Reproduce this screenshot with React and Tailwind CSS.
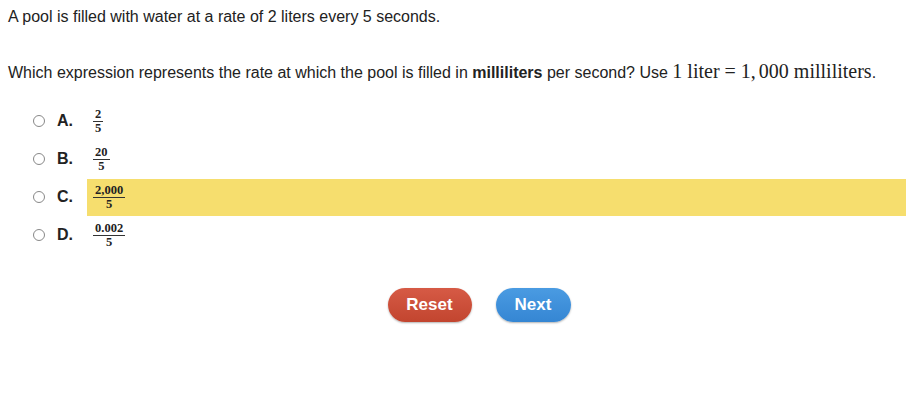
import React from "react";

function Frac({ num, den }) {
  return (
    <span className="inline-flex flex-col items-center text-[12.5px] leading-[13px] font-semibold text-[#222]" style={{ fontFamily: "'Liberation Serif', serif" }}>
      <span className="border-b border-[#333] px-[2px]">{num}</span>
      <span>{den}</span>
    </span>
  );
}

function Option({ letter, num, den, highlight }) {
  return (
    <div className="flex items-center h-[38px]">
      <div className="w-[33px]" />
      <span className="w-[12px] h-[12px] rounded-full border border-[#888] bg-white" />
      <span className="ml-[12px] w-[30px] font-bold text-[16px] text-[#222]">{letter}.</span>
      <div className={`flex-1 h-[37px] flex items-center pl-[6px] ${highlight ? "bg-[#f6de6e]" : ""}`}>
        <Frac num={num} den={den} />
      </div>
    </div>
  );
}

export default function App() {
  return (
    <div className="w-[906px] h-[418px] bg-white text-[#222] text-[16px]" style={{ fontFamily: "'Liberation Sans', Arial, sans-serif" }}>
      <div className="px-[8px] pt-[8px]">
        <p className="leading-[18px]">A pool is filled with water at a rate of 2 liters every 5 seconds.</p>
        <p className="leading-[18px] mt-[36px]">
          Which expression represents the rate at which the pool is filled in <b>milliliters</b> per second? Use{" "}
          <span className="text-[20px]" style={{ fontFamily: "'Liberation Serif', serif" }}>1 liter<span className="mx-[5px]">=</span>1,<span className="ml-[3px]">000</span> milliliters</span>.
        </p>
      </div>
      <div className="mt-[20px]">
        <Option letter="A" num="2" den="5" />
        <Option letter="B" num="20" den="5" />
        <Option letter="C" num="2,000" den="5" highlight />
        <Option letter="D" num="0.002" den="5" />
      </div>
      <div className="flex justify-center gap-[24px] mt-[34px] pl-[52px]">
        <button className="w-[84px] h-[34px] rounded-full bg-gradient-to-b from-[#d65a45] to-[#c2452f] text-white font-bold text-[17px] shadow-[0_1px_2px_rgba(0,0,0,0.3)]">Reset</button>
        <button className="w-[75px] h-[34px] rounded-full bg-gradient-to-b from-[#4a9be2] to-[#3586d3] text-white font-bold text-[17px] shadow-[0_1px_2px_rgba(0,0,0,0.3)]">Next</button>
      </div>
    </div>
  );
}
